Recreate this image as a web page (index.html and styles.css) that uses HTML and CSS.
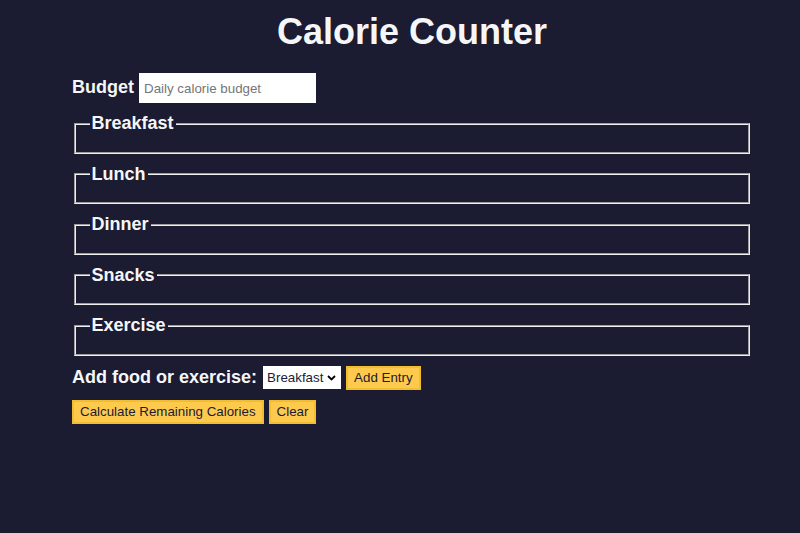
FILE: index.html
```html
<!DOCTYPE html>
<html lang="en">
<head>
<meta charset="utf-8">
<title>Calorie Counter</title>
<link rel="stylesheet" href="styles.css">
</head>
<body class="page">
<main>
  <h1 class="title">Calorie Counter</h1>
  <div class="container">
    <form class="calorie-form" id="calorie-counter">
      <label class="label" for="budget">Budget</label>
      <input class="budget-input" type="number" min="0" id="budget" placeholder="Daily calorie budget">
      <fieldset class="meal"><legend class="legend">Breakfast</legend><div class="input-container"></div></fieldset>
      <fieldset class="meal"><legend class="legend">Lunch</legend><div class="input-container"></div></fieldset>
      <fieldset class="meal"><legend class="legend">Dinner</legend><div class="input-container"></div></fieldset>
      <fieldset class="meal"><legend class="legend">Snacks</legend><div class="input-container"></div></fieldset>
      <fieldset class="meal"><legend class="legend">Exercise</legend><div class="input-container"></div></fieldset>
      <div class="controls">
        <label class="label" for="entry-dropdown">Add food or exercise:</label>
        <select class="dropdown" id="entry-dropdown">
          <option value="breakfast" selected>Breakfast</option>
          <option value="lunch">Lunch</option>
          <option value="dinner">Dinner</option>
          <option value="snacks">Snacks</option>
          <option value="exercise">Exercise</option>
        </select>
        <button class="btn" type="button">Add Entry</button>
      </div>
      <div class="actions">
        <button class="btn" type="button">Calculate Remaining Calories</button>
        <button class="btn" type="button">Clear</button>
      </div>
    </form>
  </div>
</main>
</body>
</html>
```

FILE: styles.css
```css
.page {
  margin: 0;
  background-color: #1b1b32;
  color: #f5f6f7;
  font-family: "Liberation Sans", Arial, sans-serif;
  font-size: 18px;
}

.title {
  text-align: center;
  font-size: 36px;
  margin: 11px 0 0;
  padding-left: 24px;
}

.container {
  width: 680px;
  margin: 20px 0 0 72px;
}

.label,
.legend {
  font-weight: bold;
}

.budget-input,
.btn,
.dropdown {
  font-family: "Liberation Sans", Arial, sans-serif;
  font-size: 13.333px;
  color: #1b1b32;
  margin-bottom: 10px;
}

.budget-input {
  box-sizing: border-box;
  width: 177px;
  height: 30px;
  padding: 1px 4px;
  border: 1px solid #ffffff;
  background: #ffffff;
}

.budget-input::placeholder {
  color: #757575;
}

.meal {
  margin: 0 2px 10px;
  padding: 0.35em 0.75em 0.625em;
  border: 2px groove #f0f0f0;
  min-width: 0;
}

.legend {
  padding: 0 2px;
}

.dropdown {
  -webkit-appearance: none;
  appearance: none;
  box-sizing: border-box;
  width: 78px;
  height: 23px;
  margin-left: 1px;
  padding: 0 14px 0 3px;
  border: 1px solid #ffffff;
  border-radius: 0;
  background-color: #ffffff;
  background-image: url("data:image/svg+xml,%3Csvg xmlns='http://www.w3.org/2000/svg' width='9' height='6' viewBox='0 0 9 6'%3E%3Cpath d='M1 1l3.5 3.5L8 1' fill='none' stroke='%23000' stroke-width='1.8'/%3E%3C/svg%3E");
  background-repeat: no-repeat;
  background-position: right 4px center;
  background-size: 9px 6px;
}

.btn {
  min-height: 24px;
  padding: 1px 6px;
  background-color: #feca4d;
  border: 2px solid #f1be32;
  cursor: pointer;
}
```
